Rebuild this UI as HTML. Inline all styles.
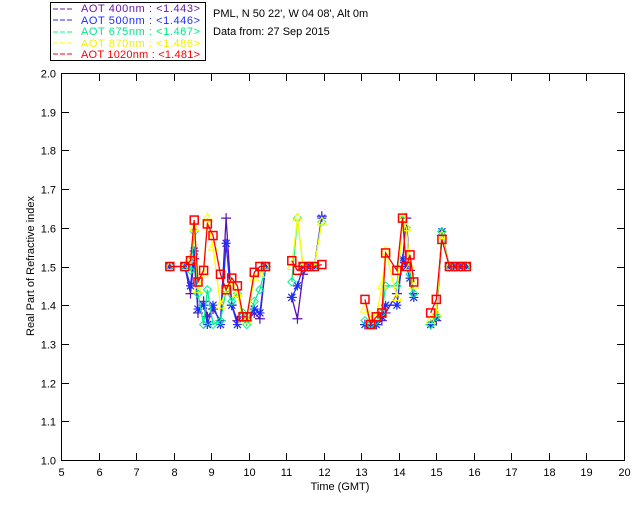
<!DOCTYPE html>
<html><head><meta charset="utf-8"><style>
html,body{margin:0;padding:0;background:#fff;width:640px;height:512px;overflow:hidden}
svg{display:block;font-family:"Liberation Sans",sans-serif}
</style></head><body>
<svg id="s" width="640" height="512" xmlns="http://www.w3.org/2000/svg">
<rect x="0" y="0" width="640" height="512" fill="#fff"/>
<rect x="50.5" y="2.5" width="155" height="58" fill="none" stroke="#000" stroke-width="1"/>
<g font-size="11">
<line x1="53" y1="9" x2="74" y2="9" stroke="#6a1aa8" stroke-dasharray="5,2"/>
<text x="81" y="12" fill="#6a1aa8" textLength="119" lengthAdjust="spacing">AOT  400nm : &lt;1.443&gt;</text>
<line x1="53" y1="20" x2="74" y2="20" stroke="#1e2cff" stroke-dasharray="5,2"/>
<text x="81" y="24" fill="#1e2cff" textLength="119" lengthAdjust="spacing">AOT  500nm : &lt;1.446&gt;</text>
<line x1="53" y1="32" x2="74" y2="32" stroke="#00ff80" stroke-dasharray="5,2"/>
<text x="81" y="35" fill="#00e88a" textLength="119" lengthAdjust="spacing">AOT  675nm : &lt;1.467&gt;</text>
<line x1="53" y1="43" x2="74" y2="43" stroke="#ffff00" stroke-dasharray="5,2"/>
<text x="81" y="47" fill="#f0f000" textLength="119" lengthAdjust="spacing">AOT  870nm : &lt;1.486&gt;</text>
<line x1="53" y1="54" x2="74" y2="54" stroke="#ff0000" stroke-dasharray="5,2"/>
<text x="81" y="58" fill="#ff0000" textLength="119" lengthAdjust="spacing">AOT 1020nm : &lt;1.481&gt;</text>
</g>
<text x="213" y="17" font-size="11">PML, N 50 22', W 04 08', Alt 0m</text>
<text x="213" y="35" font-size="11">Data from: 27 Sep 2015</text>
<rect x="61.5" y="73.5" width="563" height="387" fill="none" stroke="#000"/>
<g id="ax" stroke="#000"></g>
<g id="lab" font-size="11"></g>
<text x="340" y="490" font-size="11" text-anchor="middle">Time (GMT)</text>
<text transform="translate(34,266) rotate(-90)" font-size="11" text-anchor="middle">Real Part of Refractive index</text>
<g id="d"></g>
</svg>
<script>
var NS="http://www.w3.org/2000/svg";
function X(t){return 61+(t-5)*37.53}
function Y(v){return 460-(v-1)*387}
function el(p,n,a,txt){var e=document.createElementNS(NS,n);for(var k in a)e.setAttribute(k,a[k]);if(txt)e.textContent=txt;p.appendChild(e);return e}
var ax=document.getElementById('ax'),lab=document.getElementById('lab');
for(var i=5;i<=20;i++){var x=Math.round(X(i))+.5;
 if(i>5&&i<20){el(ax,'line',{x1:x,y1:460,x2:x,y2:453});el(ax,'line',{x1:x,y1:74,x2:x,y2:81});}
 el(lab,'text',{x:x,y:476,'text-anchor':'middle'},String(i));}
for(var j=0;j<=10;j++){var v=1+j/10,y=Math.round(Y(v))+.5;
 if(j>0&&j<10){el(ax,'line',{x1:62,y1:y,x2:69,y2:y});el(ax,'line',{x1:624,y1:y,x2:617,y2:y});}
 el(lab,'text',{x:56,y:y+4,'text-anchor':'end'},v.toFixed(1));}
var G=[
{t:[7.9,8.3,8.45,8.55,8.65,8.8,8.9,9.05,9.25,9.4,9.55,9.7,9.85,9.95,10.15,10.3,10.45],
 s:[[1.5,1.5,1.43,1.52,1.38,1.41,1.37,1.39,1.36,1.625,1.40,1.36,1.37,1.36,1.38,1.365,1.5],
    [1.5,1.5,1.45,1.54,1.39,1.40,1.35,1.40,1.35,1.56,1.40,1.35,1.37,1.36,1.39,1.38,1.5],
    [1.5,1.5,1.49,1.59,1.43,1.35,1.44,1.35,1.36,1.44,1.41,1.43,1.38,1.35,1.41,1.44,1.5],
    [1.5,1.5,1.52,1.6,1.44,1.48,1.625,1.55,1.4,1.44,1.46,1.43,1.36,1.36,1.47,1.48,1.5],
    [1.5,1.5,1.515,1.62,1.46,1.49,1.61,1.58,1.48,1.44,1.47,1.45,1.37,1.37,1.485,1.5,1.5]]},
{t:[11.15,11.3,11.45,11.6,11.75,11.95],
 s:[[1.42,1.365,1.48,1.5,1.5,1.63],[1.42,1.45,1.5,1.5,1.5,1.625],[1.46,1.625,1.5,1.5,1.5,1.615],[1.50,1.625,1.5,1.5,1.5,1.615],[1.515,1.49,1.5,1.5,1.5,1.505]]},
{t:[13.1,13.25,13.4,13.55,13.65,13.95,14.1,14.2,14.3,14.4],
 s:[[1.35,1.35,1.35,1.36,1.38,1.43,1.51,1.625,1.49,1.43],[1.35,1.35,1.35,1.37,1.40,1.40,1.52,1.5,1.47,1.42],[1.36,1.35,1.36,1.38,1.45,1.45,1.62,1.6,1.48,1.43],[1.39,1.36,1.37,1.45,1.54,1.42,1.625,1.6,1.5,1.45],[1.415,1.35,1.37,1.38,1.535,1.49,1.625,1.5,1.53,1.46]]},
{t:[14.85,15.0,15.15,15.35,15.5,15.65,15.8],
 s:[[1.35,1.36,1.58,1.5,1.5,1.5,1.5],[1.35,1.37,1.59,1.5,1.5,1.5,1.5],[1.35,1.37,1.59,1.5,1.5,1.5,1.5],[1.36,1.38,1.58,1.5,1.5,1.5,1.5],[1.38,1.415,1.57,1.5,1.5,1.5,1.5]]}];
var C=['#5a10b0','#1e2cff','#00f090','#ffff00','#ff0000'];
var d=document.getElementById('d');
for(var k=0;k<5;k++){G.forEach(function(g){
 var pts=g.t.map(function(t,i){return X(t).toFixed(1)+','+Y(g.s[k][i]).toFixed(1)}).join(' ');
 el(d,'polyline',{points:pts,fill:'none',stroke:C[k],'stroke-width':1.3});
 g.t.forEach(function(t,i){var x=X(t),y=Y(g.s[k][i]),c=C[k];
  if(k==0){el(d,'path',{d:'M'+(x-5)+' '+y+'h10M'+x+' '+(y-5)+'v10',stroke:c,fill:'none','stroke-width':1.2});}
  else if(k==1){el(d,'path',{d:'M'+(x-4.5)+' '+y+'h9M'+x+' '+(y-4.5)+'v9M'+(x-3.5)+' '+(y-3.5)+'l7 7M'+(x-3.5)+' '+(y+3.5)+'l7 -7',stroke:c,fill:'none','stroke-width':1.2});}
  else if(k==2){el(d,'path',{d:'M'+x+' '+(y-4)+'l4 4l-4 4l-4 -4z',stroke:c,fill:'none','stroke-width':1});}
  else if(k==3){el(d,'path',{d:'M'+x+' '+(y-5)+'l4.5 8h-9z',stroke:c,fill:'none','stroke-width':1});}
  else {el(d,'rect',{x:x-4,y:y-4,width:8,height:8,stroke:c,fill:'none','stroke-width':1.5});}
 });});}
</script>
</body></html>
